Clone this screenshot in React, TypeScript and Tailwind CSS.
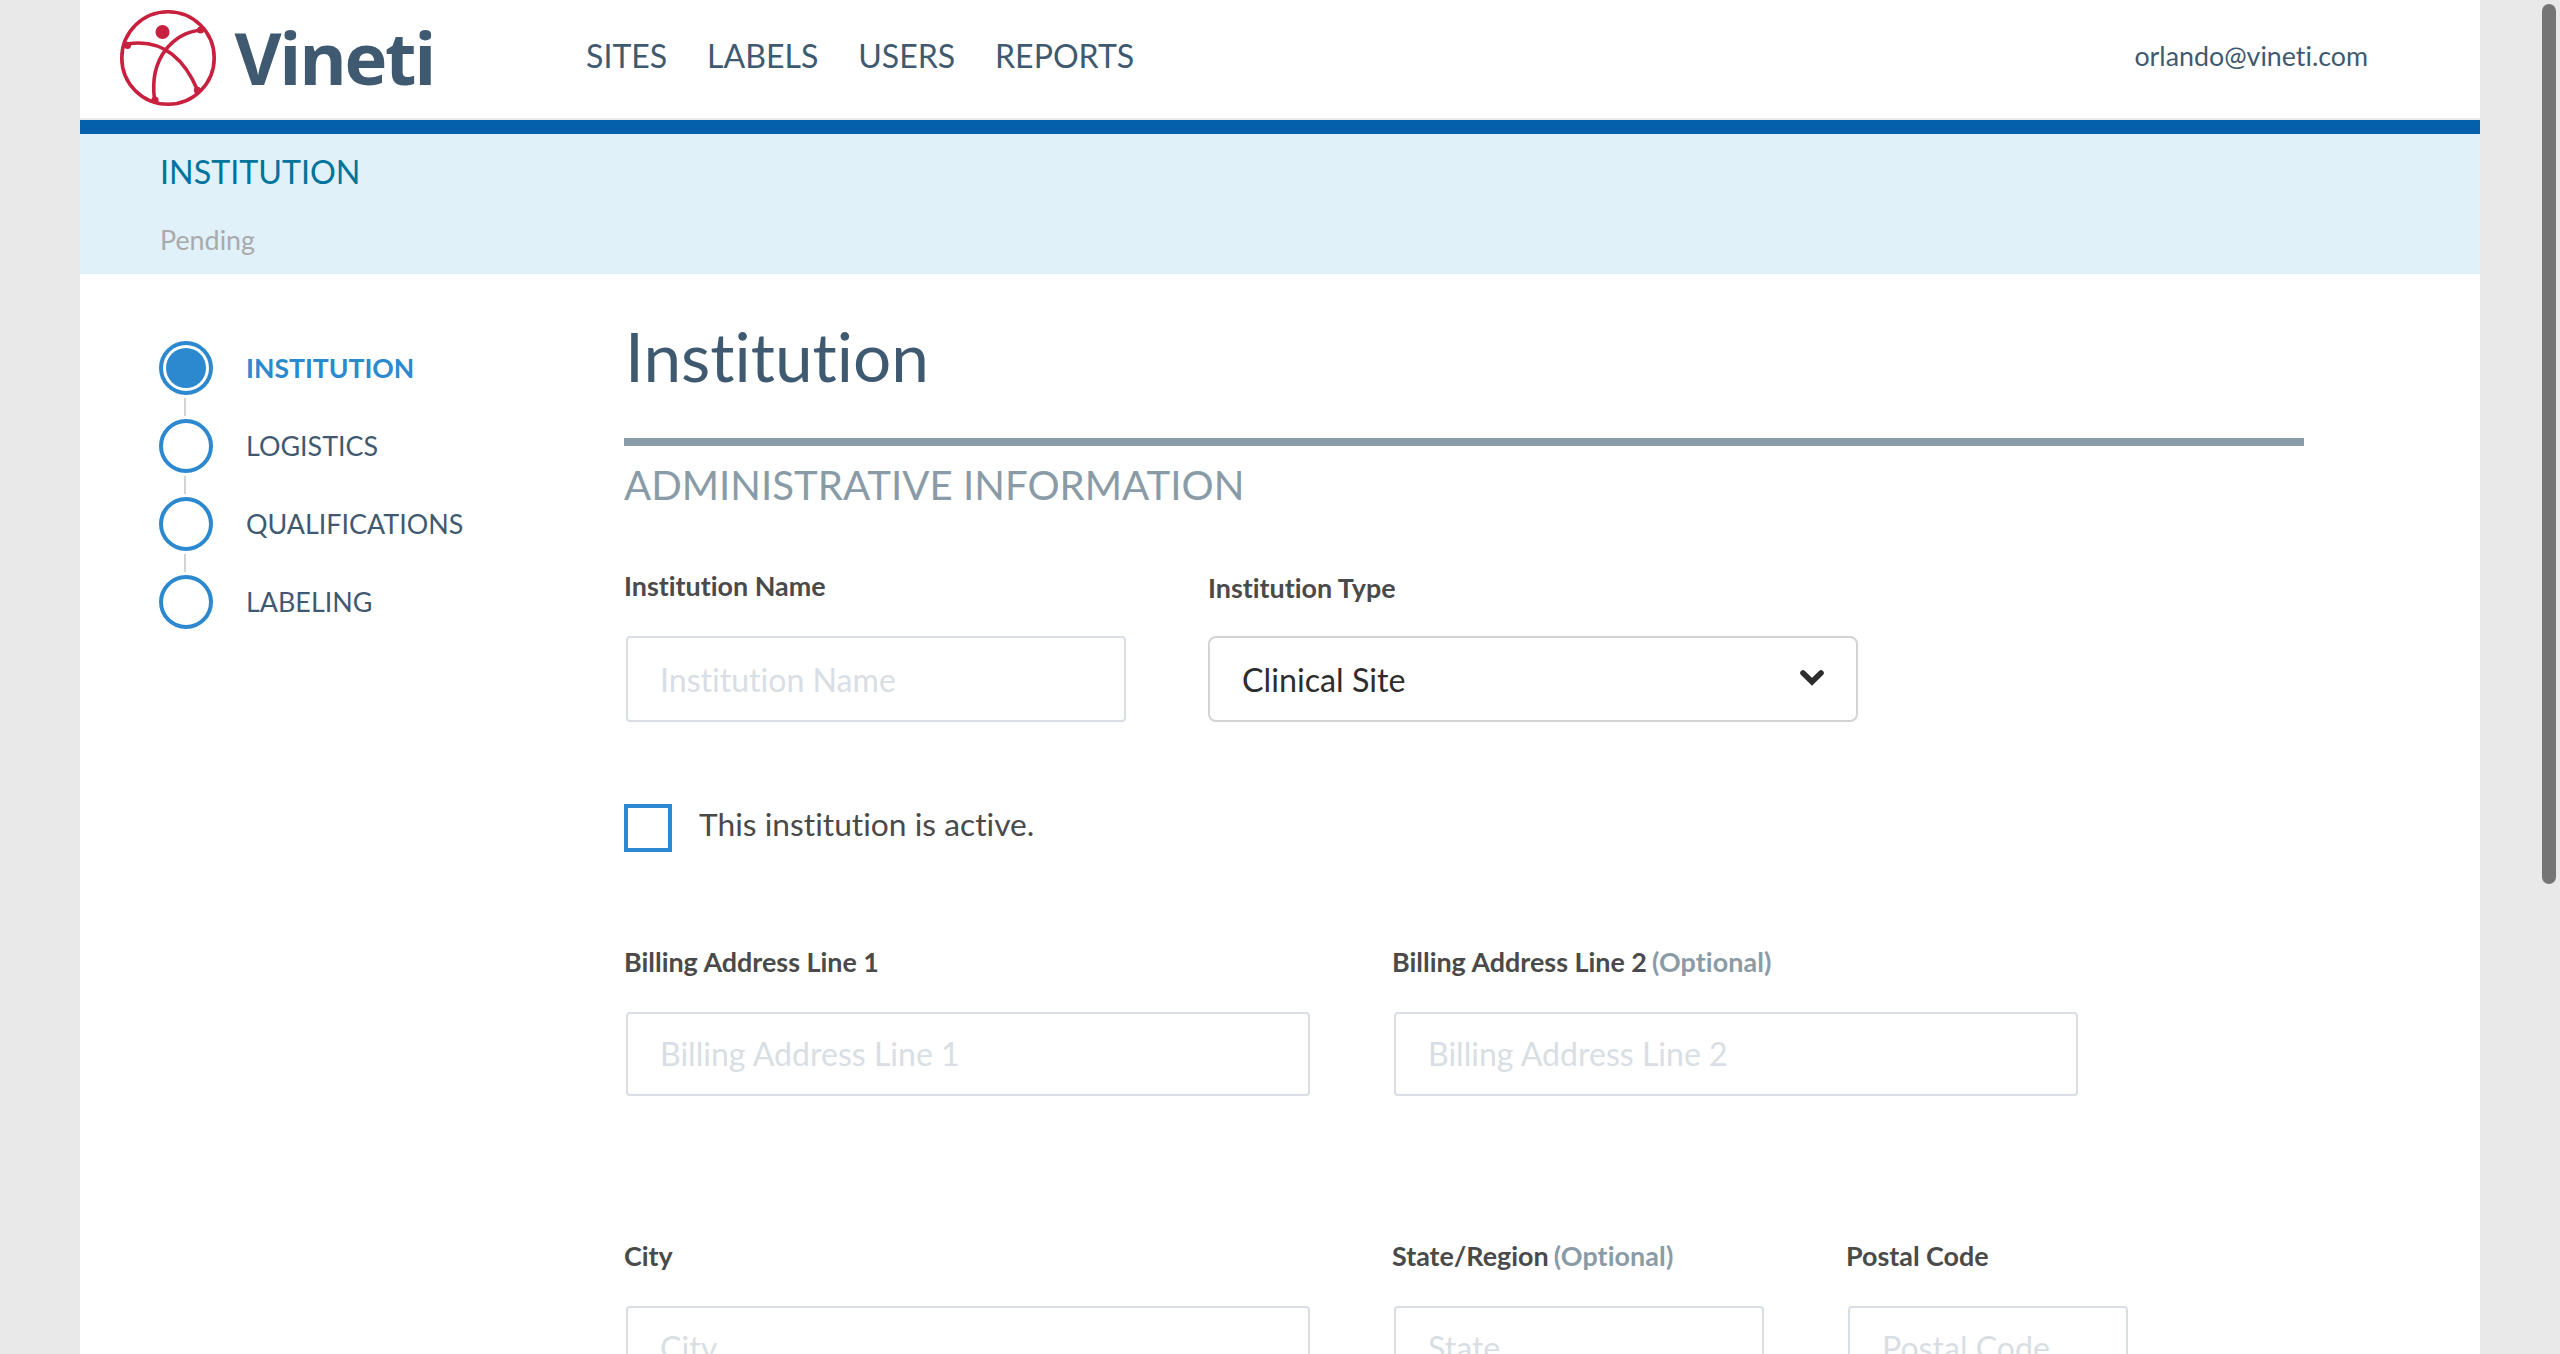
function Logo() {
  return (
    <div className="flex w-[466px]">
      <svg viewBox="0 0 96 96" className="mt-[10px] h-24 w-24" fill="none" stroke="#c8203f" strokeWidth="3.6">
        <circle cx="48" cy="48" r="46.2" />
        <path d="M7 34C34 29.5 60 39 77.5 80" />
        <path d="M81 20C54 23 29 47 34.5 89.5" />
        <g fill="#c8203f" stroke="none">
          <circle cx="42.5" cy="22" r="7" />
          <circle cx="7.5" cy="35.3" r="3.6" />
          <circle cx="80.5" cy="20" r="3.6" />
          <circle cx="77.5" cy="80.3" r="3.6" />
          <circle cx="35" cy="90" r="3.6" />
        </g>
      </svg>
      <span className="ml-[18.5px] mt-[9px] font-['Open_Sans',sans-serif] text-[72.5px] leading-[97px] font-bold tracking-[-2.3px] text-[#3f5a70]">
        Vineti
      </span>
    </div>
  );
}

const steps = ["INSTITUTION", "LOGISTICS", "QUALIFICATIONS", "LABELING"];

function Steps() {
  return (
    <ol className="w-[465px] pt-[67px]">
      {steps.map((s, i) => (
        <li key={s}>
          {i > 0 && <div className="my-[3px] ml-[25px] h-[18px] w-[2px] bg-[#d3d3d3]" />}
          <div className="flex h-[54px]">
            <div className="flex h-[54px] w-[54px] items-center justify-center rounded-full border-4 border-[#2c89cf]">
              {i === 0 && <div className="h-10 w-10 rounded-full bg-[#2c89cf]" />}
            </div>
            <span
              className={
                i === 0
                  ? "ml-[33px] mt-[11px] text-[26.6px] leading-[33px] font-bold text-[#2c89cf]"
                  : "ml-[33px] mt-[10px] text-[26.88px] leading-[33px] text-[#3f5a70]"
              }
            >
              {s}
            </span>
          </div>
        </li>
      ))}
    </ol>
  );
}

type FieldProps = { label: string; placeholder: string; optional?: boolean; box: string };

function Field({ label, placeholder, optional, box }: FieldProps) {
  return (
    <label className="flex flex-col">
      <span className="text-[26.88px] leading-[33px] font-bold whitespace-nowrap text-[#4a4a4a]">
        {label}
        {optional && <span className="tracking-[0.1px] text-[#8a9ba8] [word-spacing:-1.5px]"> (Optional)</span>}
      </span>
      <input
        placeholder={placeholder}
        className={`ml-[2px] mt-[34px] rounded-[4px] border-2 border-[#d8dee3] bg-white pl-8 text-[32.1px] leading-[39px] placeholder:text-[#d8dee3] placeholder:opacity-100 ${box}`}
      />
    </label>
  );
}

export default function App() {
  return (
    <div className="relative h-[1354px] w-[2560px] overflow-hidden bg-[#e9e9e9] font-['Lato',sans-serif] [font-variant-ligatures:none]">
      <div className="mx-20 h-[1354px] bg-white">
        <header className="flex h-[120px] items-start border-b-2 border-[#e9e9e9] pl-10">
          <Logo />
          <nav className="mt-9 flex gap-[39.8px] text-[32.1px] leading-[39px] text-[#3f5a70]">
            <a>SITES</a>
            <a>LABELS</a>
            <a>USERS</a>
            <a>REPORTS</a>
          </nav>
          <span className="ml-auto mr-[112px] mt-10 text-[26.8px] leading-[33px] text-[#3f5a70]">orlando@vineti.com</span>
        </header>
        <section className="h-[154px] border-t-[14px] border-[#0460aa] bg-[#e0f1fa] pl-20">
          <h2 className="pt-[18px] text-[32.256px] leading-[39px] text-[#00749c]">INSTITUTION</h2>
          <p className="mt-[32px] text-[26.88px] leading-[33px] text-[#aaaaaa]">Pending</p>
        </section>
        <div className="flex pl-[79px]">
          <Steps />
          <main className="w-[1680px] pt-[42px]">
            <h1 className="ml-px text-[67.5px] leading-[80px] text-[#3f5a70]">Institution</h1>
            <div className="mt-[42px] h-2 bg-[#8a9ba8]" />
            <h3 className="mt-[14px] text-[40.2px] leading-[49px] text-[#8a9ba8]">ADMINISTRATIVE INFORMATION</h3>
            <div className="mt-[60px] flex gap-[82px]">
              <Field label="Institution Name" placeholder="Institution Name" box="h-[86px] w-[500px] pt-[22px] pb-[21px]" />
              <div>
                <div className="mt-[2px] text-[26.88px] leading-[33px] font-bold text-[#4a4a4a]">Institution Type</div>
                <button className="mt-8 flex h-[86px] w-[650px] items-start rounded-lg border-2 border-[#d3d3d3] pl-8 pt-[22px] text-[32.256px] leading-[39px] text-[#2d2d2d]">
                  Clinical Site
                  <svg viewBox="0 0 24 16" className="ml-auto mr-8 mt-[10px] h-4 w-6" fill="none" stroke="#2d2d2d" strokeWidth="5.6" strokeLinecap="round">
                    <path d="M3 3L12 11.8L21 3" />
                  </svg>
                </button>
              </div>
            </div>
            <label className="mt-[82px] flex h-12 items-start">
              <span className="h-12 w-12 border-4 border-[#2c89cf]" />
              <span className="ml-[27px] mt-px text-[31.76px] leading-[39px] text-[#4a4a4a]">This institution is active.</span>
            </label>
            <div className="mt-[93px] flex gap-[82px]">
              <Field label="Billing Address Line 1" placeholder="Billing Address Line 1" box="h-[84px] w-[684px] pt-[20px] pb-[21px]" />
              <Field label="Billing Address Line 2" optional placeholder="Billing Address Line 2" box="h-[84px] w-[684px] pt-[20px] pb-[21px]" />
            </div>
            <div className="mt-[143px] flex gap-[82px]">
              <Field label="City" placeholder="City" box="h-[84px] w-[684px] pt-[20px] pb-[21px]" />
              <Field label="State/Region" optional placeholder="State" box="h-[84px] w-[370px] pt-[20px] pb-[21px]" />
              <Field label="Postal Code" placeholder="Postal Code" box="h-[84px] w-[280px] pt-[20px] pb-[21px]" />
            </div>
          </main>
        </div>
      </div>
      <div className="absolute top-1 right-1 h-[880px] w-[14px] rounded-full bg-[#757575]" />
    </div>
  );
}
